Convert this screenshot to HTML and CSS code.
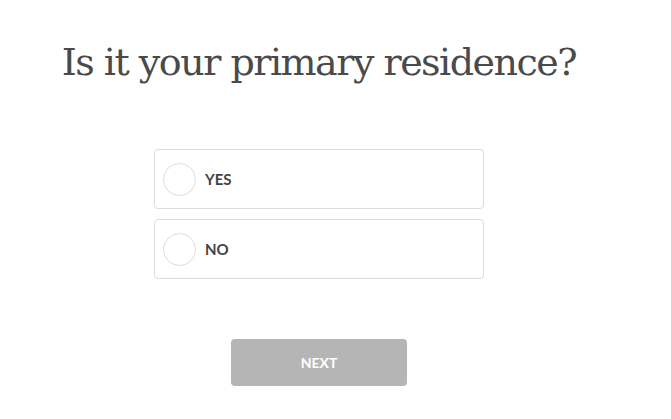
FILE: index.html
```html
<!DOCTYPE html>
<html>
<head>
<meta charset="utf-8">
<link rel="stylesheet" href="styles.css">
</head>
<body>
<main class="page">
  <h1 class="question">Is it your primary residence?</h1>
  <div class="options">
    <label class="option"><span class="radio"></span><span class="label">YES</span></label>
    <label class="option"><span class="radio"></span><span class="label">NO</span></label>
  </div>
  <div class="actions">
    <button class="next" type="button">NEXT</button>
  </div>
</main>
</body>
</html>
```
FILE: styles.css
```css
html, body {
  margin: 0;
  padding: 0;
  background: #ffffff;
}
.page {
  width: 638px;
  display: flex;
  flex-direction: column;
  align-items: center;
  padding-top: 38px;
}
.question {
  margin: 0;
  font-family: "DejaVu Serif", serif;
  font-weight: normal;
  font-size: 38px;
  line-height: 48px;
  letter-spacing: -1.5px;
  color: #4a4a4a;
  white-space: nowrap;
}
.options {
  margin-top: 63px;
  width: 330px;
  display: flex;
  flex-direction: column;
  gap: 10px;
}
.option {
  box-sizing: border-box;
  height: 60px;
  border: 1px solid #dcdcdc;
  border-radius: 4px;
  display: flex;
  align-items: center;
  padding-left: 8px;
  gap: 9px;
}
.radio {
  box-sizing: border-box;
  width: 33px;
  height: 33px;
  border: 1px solid #dcdcdc;
  border-radius: 50%;
}
.label {
  font-family: Lato, sans-serif;
  font-weight: bold;
  font-size: 15px;
  color: #444444;
}
.actions {
  margin-top: 60px;
}
.next {
  width: 176px;
  height: 47px;
  border: none;
  border-radius: 4px;
  background: #b5b5b5;
  color: #ffffff;
  font-family: Lato, sans-serif;
  font-weight: bold;
  font-size: 14px;
}
```
